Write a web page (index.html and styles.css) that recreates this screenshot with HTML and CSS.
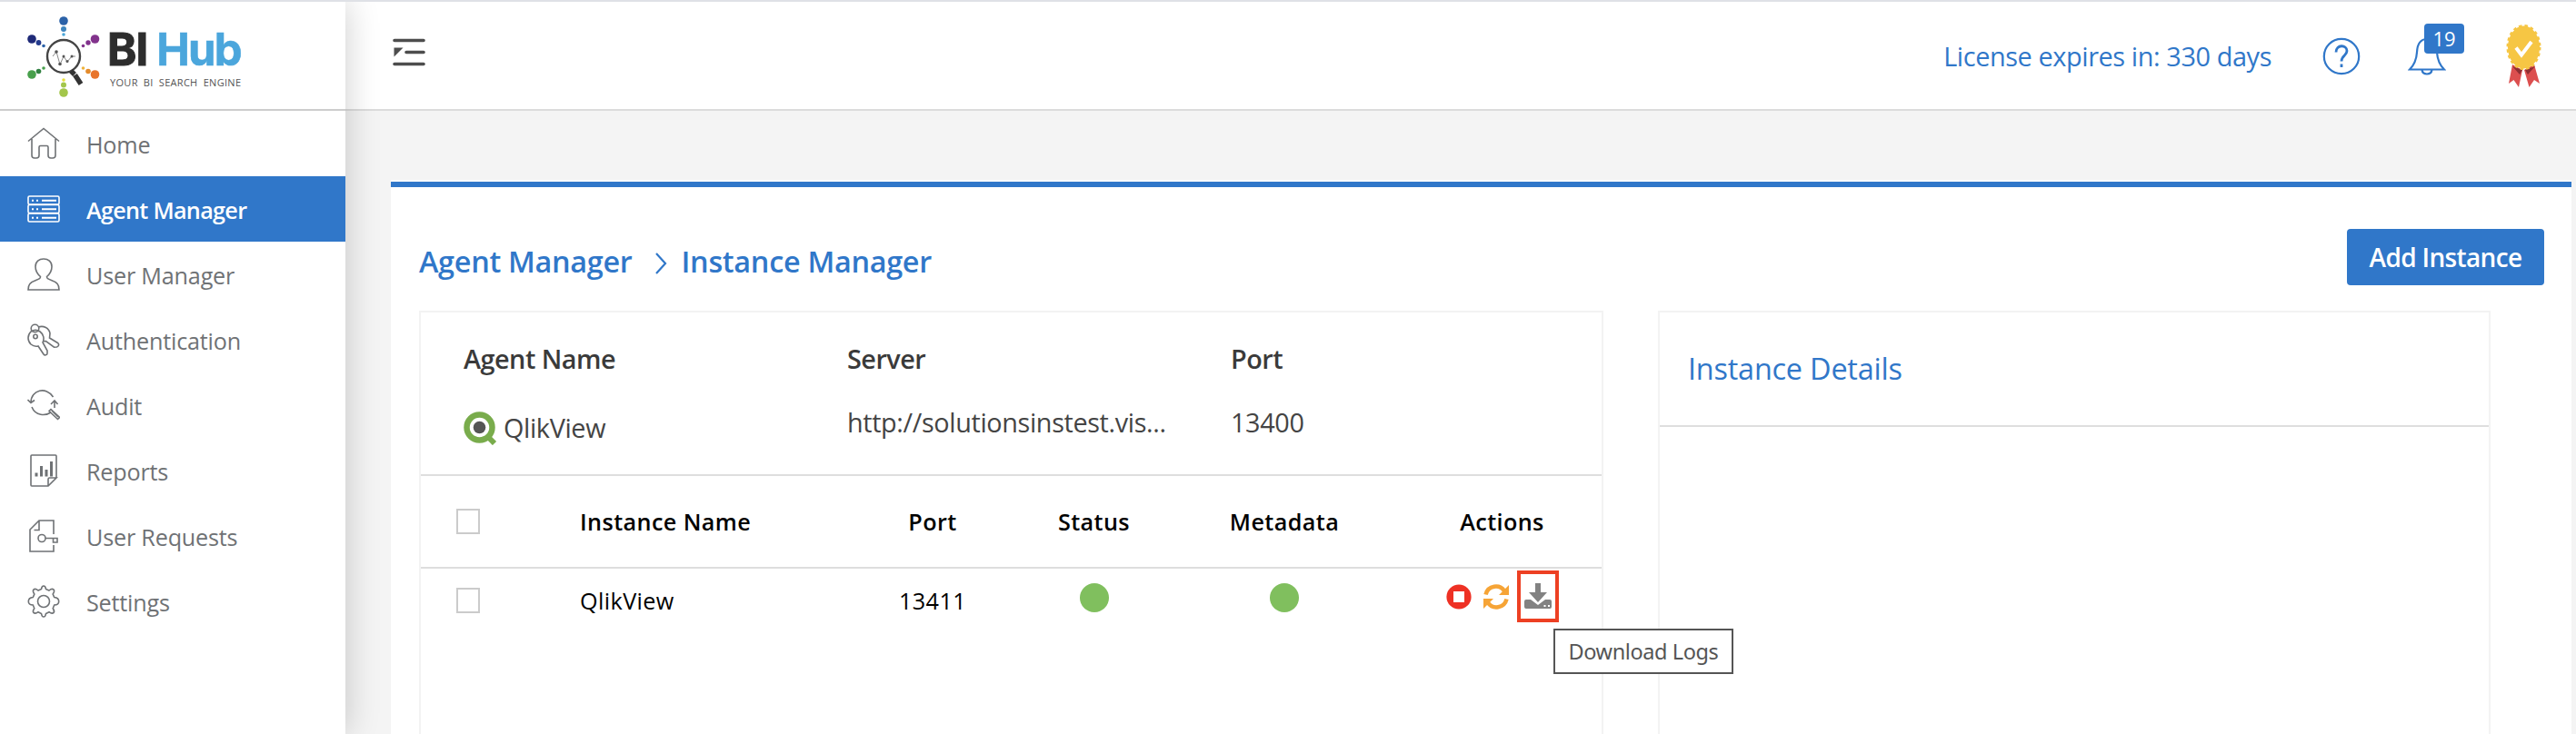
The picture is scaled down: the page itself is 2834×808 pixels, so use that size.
FILE: index.html
```html
<!DOCTYPE html>
<html lang="en">
<head>
<meta charset="utf-8">
<title>BI Hub</title>
<link rel="stylesheet" href="styles.css">
</head>
<body>
<div class="app">
  <aside class="sidebar">
    <div class="brand">
      <svg class="brand-mark" width="80" height="92" viewBox="0 0 80 92">
        <g fill="#2c62a8"><circle cx="40" cy="5" r="4.8"/><circle cx="40" cy="14" r="3" fill="#3f86bf"/><circle cx="40" cy="20" r="1.8" fill="#4ba6d8"/></g>
        <g fill="#1f2a78"><circle cx="5" cy="25" r="4.8"/><circle cx="12.500" cy="29" r="2.900" fill="#233a8d"/><circle cx="18" cy="32.500" r="1.800" fill="#2c62a8"/></g>
        <g fill="#82338c"><circle cx="74.500" cy="25" r="4.800"/><circle cx="67" cy="29" r="2.700"/><circle cx="61.500" cy="32.500" r="1.800"/></g>
        <g fill="#48a04c"><circle cx="5" cy="64" r="4.800"/><circle cx="12.500" cy="60.500" r="2.800" fill="#328243"/><circle cx="18" cy="57" r="1.800"/></g>
        <g fill="#e8752c"><circle cx="74.500" cy="64" r="4.800"/><circle cx="67" cy="60.500" r="2.800" fill="#e38b2c"/><circle cx="61.500" cy="57" r="1.800" fill="#efb33c"/></g>
        <g fill="#a3c64b"><circle cx="40" cy="84" r="4.800"/><circle cx="40" cy="75.500" r="3"/><circle cx="40" cy="70" r="1.800" fill="#e8df3a"/></g>
        <circle cx="40" cy="44" r="18" fill="#fff" stroke="#444" stroke-width="2.400"/>
        <path d="M28 44l4-5 4 14 4-9 4 6 5-6h4" fill="none" stroke="#888" stroke-width="1"/>
        <g fill="#555"><circle cx="32" cy="39" r="1.800"/><circle cx="36" cy="52.500" r="1.800"/><circle cx="40" cy="44" r="1.500"/><circle cx="44" cy="49.500" r="1.500"/><circle cx="49" cy="44" r="1.500"/></g>
        <path d="M48 60l4 4M52.500 64.500l6.500 10" stroke="#333" stroke-width="5.500"/>
      </svg>
      <div class="brand-text">
        <div class="brand-name"><span class="bi">BI</span><span class="hub">Hub</span></div>
        <div class="tagline">YOUR BI SEARCH ENGINE</div>
      </div>
    </div>
    <nav class="menu">
      <a class="item"><svg class="ico" viewBox="0 0 36 36"><path d="M1 15.500L18 1.500l17 14M5 13v18q0 3 3 3h2q3 0 3-3v-9q0-1.500 1.500-1.500h7q1.500 0 1.500 1.500v9q0 3 3 3h2q3 0 3-3V13"/></svg><span>Home</span></a>
      <a class="item active"><svg class="ico" viewBox="0 0 36 36"><rect x="1" y="4" width="34" height="9" rx="1.500"/><rect x="1" y="13.500" width="34" height="9" rx="1.500"/><rect x="1" y="23" width="34" height="9" rx="1.500"/><path d="M5 8.800h2M10 8.800h2M16 8.800h16M5 18.200h2M10 18.200h2M16 18.200h16M5 27.700h2M10 27.700h2M16 27.700h16" stroke-width="2"/></svg><span>Agent Manager</span></a>
      <a class="item"><svg class="ico" viewBox="0 0 36 36"><path d="M14.500 20.500C11 17.500 9 14 9 9.500 9 4 13 1 18 1s9 3 9 8.500c0 4.500-2 8-5.500 11 0 2 1 2.500 5 4C33 27 35 29 35 35H1c0-6 2-8 8.500-10.500 4-1.500 5-2 5-4z"/></svg><span>User Manager</span></a>
      <a class="item"><svg class="ico" viewBox="0 0 36 36"><circle cx="8.500" cy="5.500" r="4.300"/><circle cx="9" cy="14.500" r="2.200"/><path d="M4 9C0 13 0 19 4 23c3 2.500 6 2.500 8 2l6 9c1 1.500 4 1 4-1V30l-5-9c2-4 1-9-3-12-3-2-7-2-10 0zM12 4c6-2 12 1 13 7l-.5 5 9 5.500c2 1.500 1 4-1 4.500l-3 .2-9-6.700-3.500.2"/></svg><span>Authentication</span></a>
      <a class="item"><svg class="ico" viewBox="0 0 36 36"><path d="M4 15C4 1 21-3 28.500 9M5 20c4 10 15 10 21 6M.5 12L4 15.500 8 12.500M30 21v-7M26 17l4-4 3.500 4"/><path d="M24 24.500l9.500 9 2-2-9.500-9zM27 24l7 7"/></svg><span>Audit</span></a>
      <a class="item"><svg class="ico" viewBox="0 0 36 36"><path d="M32 26V2Q32 1 31 1H5Q4 1 4 2v32q0 1 1 1h18l9-9h-7.500q-1.500 0-1.500 1.500V35"/><path d="M10 20.500v4M15.500 13v11.500M21 17v7.500M26.500 8v16.500" stroke-width="3"/></svg><span>Reports</span></a>
      <a class="item"><svg class="ico" viewBox="0 0 36 36"><path d="M29 16V1H13L3 11v24h26v-7M13 1v10.500H7.500"/><circle cx="16" cy="20.500" r="4"/><path d="M20 20.500h13v4.500h-4.500v-4.500"/></svg><span>User Requests</span></a>
      <a class="item"><svg class="ico" viewBox="0 0 36 36"><circle cx="18" cy="18" r="6.500"/><path d="M15.500 4.500q.5-3.500 2.500-3.500t2.500 3.500l3.500 1.500q3-2.500 5-1 1.500 1.500-.8 5l1.500 3.500q5 .5 5 4.500t-5 4l-1.500 3.800q2.300 3.200.8 4.700-2 1.500-5-.8L20.500 31.500q-.5 3.500-2.500 3.500t-2.500-3.500L12 29.700q-3 2.300-5 .8-1.500-1.500.8-4.700L6.300 22q-5 0-5-4t5-4.500L7.800 10Q5.500 6.500 7 5q2-1.500 5 1z"/></svg><span>Settings</span></a>
    </nav>
  </aside>
  <div class="main">
    <header class="topbar">
      <svg class="toggle" width="36" height="32" viewBox="0 0 36 32"><path d="M2 2.500h32M15 15.500h19M2 28.500h32" stroke="#4d4d4d" stroke-width="3.600" stroke-linecap="round"/><path d="M1.500 10.500h10l-10 10z" fill="#4d4d4d"/></svg>
      <span class="license">License expires in: 330 days</span>
      <svg class="help" width="42" height="42" viewBox="0 0 42 42" fill="none" stroke="#3077c9" stroke-width="2.200"><circle cx="21" cy="21" r="19.200"/><path d="M15 16.500c0-9 12-8.500 12-1.500 0 5-6 5-6 11.500" stroke-width="2.800"/><path d="M21 29.500v3.500" stroke-width="2.800"/></svg>
      <div class="alerts">
        <svg width="42" height="42" viewBox="0 0 42 42" fill="none" stroke="#3077c9" stroke-width="2.200"><path d="M2 35.500c5-5 7.500-11 8-19C10.500 7 14 2 21 2s10.500 5 11 14.500c.5 8 3 14 8 19zM15.500 36c1 6 10 6 11 0"/></svg>
        <span class="badge">19</span>
      </div>
      <svg class="medal" width="40" height="70" viewBox="0 0 40 70"><path d="M8 44L4 65l5.500-4 5.500 8 4-19zM32 44l6 21-6-4-5.500 8-5.500-19z" fill="#dc4f4f"/><path d="M8 46l8 9 3-5zM33 46l-8 9-3-5z" fill="#8e2f33"/><ellipse cx="20.500" cy="25" rx="17.500" ry="23.500" fill="#f6c644"/><ellipse cx="20.500" cy="25" rx="17.500" ry="23.500" fill="none" stroke="#f6c644" stroke-width="3" stroke-dasharray="3.500 3"/><path d="M12 25.500l6 8L29 19" fill="none" stroke="#fff" stroke-width="4"/></svg>
    </header>
    <main class="content">
      <section class="page">
        <div class="page-head">
          <div class="crumbs"><span>Agent Manager</span><svg width="14" height="24" viewBox="0 0 14 24"><path d="M2 1l10 11L2 23" fill="none" stroke="#3077c9" stroke-width="2.200"/></svg><span>Instance Manager</span></div>
          <button class="add">Add Instance</button>
        </div>
        <div class="panels">
          <section class="panel instances">
            <div class="agent">
              <div><h3>Agent Name</h3><p class="agent-name"><svg width="37" height="37" viewBox="0 0 37 37"><path d="M26 27l8 8" stroke="#79ac4c" stroke-width="6"/><circle cx="17.500" cy="17.500" r="14" fill="#fff" stroke="#79ac4c" stroke-width="6.500"/><circle cx="17.500" cy="17.500" r="6.800" fill="#555"/></svg><span>QlikView</span></p></div>
              <div><h3>Server</h3><p>http://solutionsinstest.vis...</p></div>
              <div><h3>Port</h3><p>13400</p></div>
            </div>
            <div class="row head">
              <span class="check"></span><span class="name">Instance Name</span><span>Port</span><span>Status</span><span>Metadata</span><span class="act-title">Actions</span>
            </div>
            <div class="row">
              <span class="check"></span><span class="name">QlikView</span><span>13411</span><i class="dot"></i><i class="dot"></i>
              <span class="actions">
                <svg width="28" height="28" viewBox="0 0 28 28"><circle cx="14" cy="14" r="13.600" fill="#ee3124"/><rect x="8" y="8" width="12" height="12" fill="#fff"/></svg>
                <svg class="sync" width="28" height="28" viewBox="0 0 28 28"><g fill="none" stroke="#f6a436" stroke-width="4.500"><path d="M2.500 11.500C5 1 18 0 23 7.500M25.500 16.500C23 27 10 28 5 20.500"/></g><path d="M28 1v11H17zM0 27V16h11z" fill="#f6a436"/></svg>
                <span class="marked"><svg width="30" height="29" viewBox="0 0 30 29"><path d="M0 20q0-2 2-2h5l8 6 8-6h5q2 0 2 2v6q0 2-2 2H2q-2 0-2-2z" fill="#828282"/><path d="M12 0h6v10h7L15 21 5 10h7z" fill="#828282"/><path d="M21.500 25h2M26 25h2" stroke="#fff" stroke-width="2"/></svg><span class="tip">Download Logs</span></span>
              </span>
            </div>
          </section>
          <section class="panel details"><h2>Instance Details</h2></section>
        </div>
      </section>
    </main>
  </div>
</div>
</body>
</html>
```
FILE: styles.css
```css
* { box-sizing: border-box; }
body { margin: 0; font-family: "Open Sans", "Noto Sans", sans-serif; font-size: 25.2px; color: #000; }
h2, h3, p { margin: 0; font-weight: 400; }
span { white-space: nowrap; }
.app { display: flex; width: 2834px; height: 808px; overflow: hidden; border-top: 2px solid #dfe1e6; background: #fff; }

.sidebar { width: 380px; flex: none; background: #fff; z-index: 1; box-shadow: 0 0 36px rgba(0, 0, 0, .2); }
.brand { height: 120px; display: flex; align-items: flex-start; gap: 11px; padding: 16px 0 0 30px; border-bottom: 2px solid #cdcdcd; }
.brand-text { padding-top: 12px; }
.brand-name { display: flex; gap: 10px; margin-left: -3px; font: 700 49px/49px Inter, sans-serif; }
.bi { color: #2d2d2d; letter-spacing: -1px; -webkit-text-stroke: 1px #2d2d2d; }
.hub { color: #4ba6dc; letter-spacing: -1.8px; -webkit-text-stroke: .6px #4ba6dc; }
.tagline { margin-top: 5px; font: 500 11px/14px "Open Sans", sans-serif; letter-spacing: .3px; word-spacing: 3px; color: #555; }
.item { display: flex; align-items: center; gap: 29px; height: 72px; padding-left: 30px; color: #6f7275; letter-spacing: -.2px; }
.item span { padding-top: 2px; }
.item.active { background: #3077c9; color: #fff; font-weight: 600; letter-spacing: -.7px; }
.ico { width: 36px; height: 36px; fill: none; stroke: currentColor; stroke-width: 1.6; }

.main { flex: 1; display: flex; flex-direction: column; }
.topbar { height: 120px; flex: none; display: flex; align-items: center; padding: 0 38px 0 52px; border-bottom: 2px solid #dcdcdc; background: #fff; }
.toggle { margin: -6px auto 0 0; }
.license { font-size: 28.8px; letter-spacing: -.37px; color: #3077c9; }
.help { margin: 2px 0 0 56px; }
.alerts { position: relative; height: 42px; margin: 2px 0 0 52px; }
.badge { position: absolute; left: 18px; top: -15px; width: 44px; height: 33px; border-radius: 4px; background: #3077c9; color: #fff; font-size: 22px; line-height: 32px; text-align: center; }
.medal { margin: 2px 0 0 65px; }

.content { flex: 1; padding: 76px 5px 0 50px; background: #f4f4f4; }
.page { height: 100%; background: #fff; border-top: 2px solid #fdfdfd; }
.page::before { content: ""; display: block; height: 6px; background: #3077c9; }
.page-head { display: flex; align-items: flex-end; justify-content: space-between; height: 136px; padding: 0 30px 36px 31px; }
.crumbs { display: flex; align-items: center; height: 46px; margin-bottom: -4px; color: #3077c9; font-size: 32.4px; font-weight: 600; letter-spacing: -.3px; }
.crumbs svg { margin: 6px 16px 0 24px; }
.add { width: 217px; height: 62px; margin-bottom: -8px; padding: 0; border: 0; border-radius: 4px; background: #3077c9; color: #fff; font: 600 28px/60px "Open Sans", sans-serif; letter-spacing: -.65px; }

.panels { display: flex; gap: 60px; height: 500px; padding-left: 31px; }
.panel { border: 2px solid #f3f3f3; }
.instances { width: 1303px; }
.agent { display: grid; grid-template-columns: 422px 422px 1fr; height: 180px; padding: 31px 0 0 47px; border-bottom: 2px solid #dedede; font-size: 28.8px; line-height: 40px; letter-spacing: -.36px; color: #444; }
.agent h3 { font-size: 28.8px; font-weight: 600; letter-spacing: -.5px; color: #3a3a3a; }
.agent p { margin-top: 30px; }
.agent .agent-name { display: flex; align-items: center; gap: 7px; margin-top: 36px; }
.row { display: grid; grid-template-columns: 175px 300px 176px 179px 240px 229px; height: 70px; align-items: center; text-align: center; letter-spacing: .4px; }
.row .name { text-align: left; }
.head { height: 102px; border-bottom: 2px solid #dedede; font-weight: 600; }
.act-title { padding-left: 10px; }
.check { width: 26px; height: 28px; margin-left: 39px; border: 2px solid #cbcbcb; }
.row:not(.head) span:not(.actions, .marked, .tip, .check) { padding-bottom: 1px; }
.dot { justify-self: center; width: 32px; height: 32px; margin-bottom: 7px; border-radius: 50%; background: #80bf5e; }
.actions { display: flex; align-items: center; padding: 0 0 9px 58px; }
.sync { margin: 0 9px 0 13px; }
.marked { position: relative; display: grid; place-items: center; width: 46px; height: 57px; border: 4px solid #ed4023; }
.tip { position: absolute; left: 36px; top: 60px; width: 198px; height: 50px; border: 2px solid #555; background: #fff; font: 400 23.500px/46px "Noto Sans", sans-serif; letter-spacing: -.4px; color: #555; text-align: center; }
.details { width: 916px; }
.details h2 { height: 126px; padding: 39px 0 0 31px; border-bottom: 2px solid #dedede; font-size: 32.4px; line-height: 44px; letter-spacing: -.2px; color: #3077c9; }
```
